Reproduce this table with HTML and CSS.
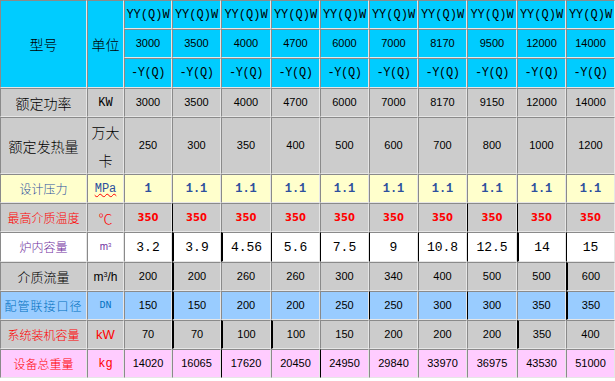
FILE: index.html
```html
<!DOCTYPE html>
<html lang="zh">
<head>
<meta charset="utf-8">
<title>锅炉参数表</title>
<link rel="stylesheet" href="styles.css">
</head>
<body>
<table class="spec">
  <colgroup>
    <col class="c-name"><col class="c-unit">
    <col class="c48"><col class="c49"><col class="c50"><col class="c49"><col class="c49">
    <col class="c49"><col class="c49"><col class="c50"><col class="c49"><col class="c49">
  </colgroup>
  <tr class="h29 hdr">
    <td rowspan="3" class="zh14">型号</td>
    <td rowspan="3" class="zh14">单位</td>
    <td class="mono">YY(Q)W</td><td class="mono">YY(Q)W</td><td class="mono">YY(Q)W</td><td class="mono">YY(Q)W</td><td class="mono">YY(Q)W</td>
    <td class="mono">YY(Q)W</td><td class="mono">YY(Q)W</td><td class="mono">YY(Q)W</td><td class="mono">YY(Q)W</td><td class="mono">YY(Q)W</td>
  </tr>
  <tr class="h29 hdr">
    <td class="num">3000</td><td class="num">3500</td><td class="num">4000</td><td class="num">4700</td><td class="num">6000</td>
    <td class="num">7000</td><td class="num">8170</td><td class="num">9500</td><td class="num">12000</td><td class="num">14000</td>
  </tr>
  <tr class="h30 hdr">
    <td class="mono dash">-Y(Q)</td><td class="mono dash">-Y(Q)</td><td class="mono dash">-Y(Q)</td><td class="mono dash">-Y(Q)</td><td class="mono dash">-Y(Q)</td>
    <td class="mono dash">-Y(Q)</td><td class="mono dash">-Y(Q)</td><td class="mono dash">-Y(Q)</td><td class="mono dash">-Y(Q)</td><td class="mono dash">-Y(Q)</td>
  </tr>
  <tr class="h29 gray">
    <td class="zh14">额定功率</td><td class="mono">KW</td>
    <td class="num">3000</td><td class="num">3500</td><td class="num">4000</td><td class="num">4700</td><td class="num">6000</td>
    <td class="num">7000</td><td class="num">8170</td><td class="num">9150</td><td class="num">12000</td><td class="num">14000</td>
  </tr>
  <tr class="h57 gray">
    <td class="zh14">额定发热量</td>
    <td class="zh14"><span class="line">万大</span><span class="line">卡</span></td>
    <td class="num">250</td><td class="num">300</td><td class="num">350</td><td class="num">400</td><td class="num">500</td>
    <td class="num">600</td><td class="num">700</td><td class="num">800</td><td class="num">1000</td><td class="num">1200</td>
  </tr>
  <tr class="h29 yellow">
    <td class="zh12 blue">设计压力</td><td class="unit-mpa">MPa</td>
    <td class="bmono">1</td><td class="bmono">1.1</td><td class="bmono">1.1</td><td class="bmono">1.1</td><td class="bmono">1.1</td>
    <td class="bmono">1.1</td><td class="bmono">1.1</td><td class="bmono">1.1</td><td class="bmono">1.1</td><td class="bmono">1.1</td>
  </tr>
  <tr class="h29 gray">
    <td class="zh12 red">最高介质温度</td><td class="zh14 red">℃</td>
    <td class="bred">350</td><td class="bred bk">350</td><td class="bred">350</td><td class="bred">350</td><td class="bred">350</td>
    <td class="bred">350</td><td class="bred">350</td><td class="bred bk">350</td><td class="bred bk">350</td><td class="bred">350</td>
  </tr>
  <tr class="h30 white">
    <td class="zh12 purple">炉内容量</td><td class="unit-m3">m<sup>3</sup></td>
    <td class="mono val">3.2</td><td class="mono val bk2">3.9</td><td class="mono val bk2">4.56</td><td class="mono val bk">5.6</td><td class="mono val bk">7.5</td>
    <td class="mono val bk">9</td><td class="mono val bk">10.8</td><td class="mono val bk">12.5</td><td class="mono val bk2">14</td><td class="mono val bk">15</td>
  </tr>
  <tr class="h29 gray">
    <td class="zh13">介质流量</td><td class="unit-sans">m<sup>3</sup>/h</td>
    <td class="num">200</td><td class="num bk2">200</td><td class="num">260</td><td class="num">260</td><td class="num">300</td>
    <td class="num">340</td><td class="num">400</td><td class="num">500</td><td class="num">500</td><td class="num bk2">600</td>
  </tr>
  <tr class="h29 lblue">
    <td class="zh12 sblue spaced">配管联接口径</td><td class="mono small sblue">DN</td>
    <td class="num">150</td><td class="num bk2">150</td><td class="num">200</td><td class="num">200</td><td class="num">250</td>
    <td class="num bk">250</td><td class="num">300</td><td class="num bk">300</td><td class="num">350</td><td class="num bk2">350</td>
  </tr>
  <tr class="h29 gray">
    <td class="zh12 red">系统装机容量</td><td class="unit-sans red big">kW</td>
    <td class="num">70</td><td class="num bk2">70</td><td class="num bk2">100</td><td class="num bk2">100</td><td class="num">150</td>
    <td class="num">200</td><td class="num">200</td><td class="num">200</td><td class="num bk2">350</td><td class="num">400</td>
  </tr>
  <tr class="h29 pink">
    <td class="zh12 red">设备总重量</td><td class="mono red">kg</td>
    <td class="num">14020</td><td class="num">16065</td><td class="num bk">17620</td><td class="num">20450</td><td class="num bk">24950</td>
    <td class="num">29840</td><td class="num">33970</td><td class="num">36975</td><td class="num">43530</td><td class="num">51000</td>
  </tr>
</table>
</body>
</html>
```

FILE: styles.css
```css
html, body {
  margin: 0;
  padding: 0;
  background: #ffffff;
}

.spec {
  border-collapse: separate;
  border-spacing: 0;
  table-layout: fixed;
  width: 615px;
  border: 0;
  color: #000;
}

.c-name { width: 87px; }
.c-unit { width: 37px; }
.c48 { width: 48px; }
.c49 { width: 49px; }
.c50 { width: 50px; }

.spec td {
  box-sizing: border-box;
  padding: 0;
  text-align: center;
  vertical-align: middle;
  border: 1px solid;
  border-color: #8a8a8a #e6e6e6 #e6e6e6 #8a8a8a;
  overflow: hidden;
  white-space: nowrap;
  line-height: 1;
}

.h29 { height: 29px; }
.h30 { height: 30px; }
.h57 { height: 57px; }

.hdr td { background: #00ccff; }
.gray td { background: #cccccc; }
.yellow td { background: #ffffcc; }
.white td { background: #ffffff; }
.lblue td { background: #99ccff; }
.pink td { background: #ffccff; }

.zh14, .zh13, .zh12 {
  font-family: "Noto Sans CJK SC", "Noto Sans", sans-serif;
  font-weight: 300;
}
.zh14 { font-size: 14px; }
.zh13 { font-size: 13px; }
.zh12 { font-size: 12px; }

.line {
  display: block;
  height: 14px;
  line-height: 14px;
}
.line + .line { margin-top: 14px; }

.mono {
  font-family: "Liberation Mono", "DejaVu Sans Mono", monospace;
  font-size: 12px;
}
.dash { letter-spacing: -0.4px; }
.val { font-size: 13px; }
.small { font-size: 10px; }

.num {
  font-family: "Liberation Sans", Arial, sans-serif;
  font-size: 11px;
}

.bmono {
  font-family: "Liberation Mono", "DejaVu Sans Mono", monospace;
  font-size: 12px;
  font-weight: bold;
  color: #2d4f9e;
}

.bred {
  font-family: "DejaVu Sans", Verdana, sans-serif;
  font-size: 10px;
  font-weight: bold;
  color: #ff0000;
}

.unit-mpa {
  font-family: "Liberation Mono", monospace;
  font-size: 12px;
  color: #2d4f9e;
  text-decoration: underline wavy #ff0000;
  text-decoration-thickness: 1px;
}

.unit-m3 {
  font-family: "Liberation Sans", Arial, sans-serif;
  font-size: 10px;
  color: #7030a0;
}
.unit-sans {
  font-family: "Liberation Sans", Arial, sans-serif;
  font-size: 12px;
}
.big { font-size: 13px; }
sup { font-size: 0.6em; vertical-align: 0.5em; }

.blue { color: #2d4f9e; }
.sblue { color: #0070c0; }
.red { color: #ff0000; }
.purple { color: #7030a0; }
.spaced { letter-spacing: 1px; }

.spec td.bk { border-left-color: #000000; }
.spec td.bk2 { border-left: 2px solid #000000; }
```
